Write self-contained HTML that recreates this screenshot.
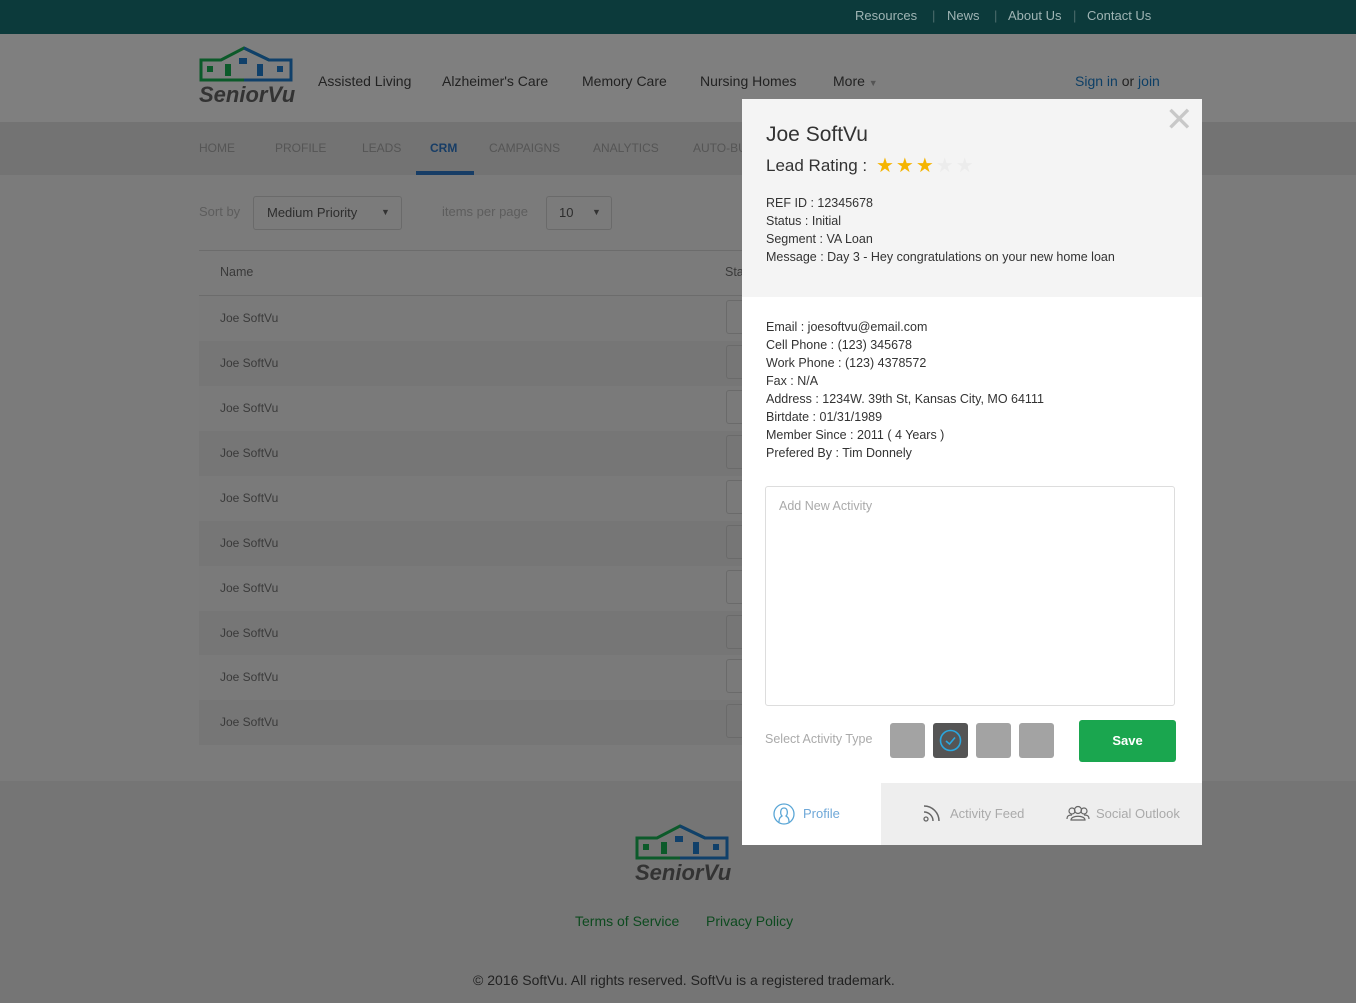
<!DOCTYPE html>
<html><head><meta charset="utf-8"><style>
*{margin:0;padding:0;box-sizing:border-box}
body{width:1356px;height:1003px;overflow:hidden;font-family:"Liberation Sans",sans-serif;background:#7b7b7b;position:relative;font-size:13px}
.a{position:absolute;white-space:nowrap}
.top{left:0;top:0;width:1356px;height:34px;background:#0c3a3b}
.top span{color:#9fb4b4;font-size:13px;top:8px}
.hdr{left:0;top:34px;width:1356px;height:88px;background:#7f7f7f}
.hdr .n{color:#222;font-size:14px;top:39px}
.nav{left:0;top:122px;width:1356px;height:53px;background:#737373}
.nav span{color:#5a5a5a;font-size:12px;top:20px}
.row{left:199px;width:545px;height:45px}
.row span{left:21px;top:15px;color:#3a3a3a;font-size:12px}
.box{left:726px;width:20px;height:34px;border:1px solid #6a6a6a;border-radius:3px}
.modal{left:742px;top:99px;width:460px;height:746px;background:#fff}
.m{color:#333;font-size:12.5px}
.sq{width:35px;height:35px;border-radius:3px;background:#a3a3a3;top:723px}
</style></head><body>
<div class="a top"></div>
<span class="a" style="left:855px;top:8px;color:#9fb4b4">Resources</span>
<span class="a" style="left:932px;top:8px;color:#4d6d6d">|</span>
<span class="a" style="left:947px;top:8px;color:#9fb4b4">News</span>
<span class="a" style="left:994px;top:8px;color:#4d6d6d">|</span>
<span class="a" style="left:1008px;top:8px;color:#9fb4b4">About Us</span>
<span class="a" style="left:1073px;top:8px;color:#4d6d6d">|</span>
<span class="a" style="left:1087px;top:8px;color:#9fb4b4">Contact Us</span>
<div class="a hdr"></div>
<svg class="a" style="left:199px;top:46px" width="94" height="36" viewBox="0 0 94 36"><path d="M2 14 H22 L45 2 L70 14 H92 V34 H2 Z" fill="none" stroke="#0c5a2a" stroke-width="3"/><path d="M45 2 L70 14 H92 V34 H45" fill="none" stroke="#10406a" stroke-width="3"/><rect x="8" y="20" width="6" height="6" fill="#0c5a2a"/><rect x="26" y="18" width="6" height="12" fill="#0c5a2a"/><rect x="40" y="12" width="8" height="6" fill="#10406a"/><rect x="58" y="18" width="6" height="12" fill="#10406a"/><rect x="78" y="20" width="6" height="6" fill="#10406a"/></svg>
<span class="a" style="left:199px;top:82px;font-size:22px;font-weight:bold;font-style:italic;color:#333">SeniorVu</span>
<span class="a" style="left:318px;top:73px;font-size:14px;color:#222">Assisted Living</span>
<span class="a" style="left:442px;top:73px;font-size:14px;color:#222">Alzheimer's Care</span>
<span class="a" style="left:582px;top:73px;font-size:14px;color:#222">Memory Care</span>
<span class="a" style="left:700px;top:73px;font-size:14px;color:#222">Nursing Homes</span>
<span class="a" style="left:833px;top:73px;font-size:14px;color:#222">More <span style="font-size:9px;color:#555">▼</span></span>
<span class="a" style="left:1075px;top:73px;font-size:14px;color:#0d3f66">Sign in <span style="color:#222">or</span> join</span>
<div class="a nav"></div>
<span class="a" style="left:199px;top:141px;font-size:12px;color:#555">HOME</span>
<span class="a" style="left:275px;top:141px;font-size:12px;color:#555">PROFILE</span>
<span class="a" style="left:362px;top:141px;font-size:12px;color:#555">LEADS</span>
<span class="a" style="left:430px;top:141px;font-size:12px;color:#173d66;font-weight:bold">CRM</span>
<div class="a" style="left:416px;top:171px;width:58px;height:4px;background:#173d66"></div>
<span class="a" style="left:489px;top:141px;font-size:12px;color:#555">CAMPAIGNS</span>
<span class="a" style="left:593px;top:141px;font-size:12px;color:#555">ANALYTICS</span>
<span class="a" style="left:693px;top:141px;font-size:12px;color:#555">AUTO-BU</span>
<span class="a" style="left:199px;top:204px;font-size:13px;color:#5d5d5d">Sort by</span>
<div class="a" style="left:253px;top:196px;width:149px;height:34px;border:1px solid #6a6a6a;border-radius:3px"></div>
<span class="a" style="left:267px;top:205px;font-size:13px;color:#2d2d2d">Medium Priority</span>
<span class="a" style="left:381px;top:207px;font-size:9px;color:#333">▼</span>
<span class="a" style="left:442px;top:204px;font-size:13px;color:#5d5d5d">items per page</span>
<div class="a" style="left:546px;top:196px;width:66px;height:34px;border:1px solid #6a6a6a;border-radius:3px"></div>
<span class="a" style="left:559px;top:205px;font-size:13px;color:#2d2d2d">10</span>
<span class="a" style="left:592px;top:207px;font-size:9px;color:#333">▼</span>
<div class="a" style="left:199px;top:250px;width:545px;height:1px;background:#6c6c6c"></div>
<span class="a" style="left:220px;top:265px;font-size:12.5px;color:#3a3a3a">Name</span>
<span class="a" style="left:725px;top:265px;font-size:12.5px;color:#3a3a3a">Sta</span>
<div class="a" style="left:199px;top:295px;width:545px;height:1px;background:#6c6c6c"></div>
<div class="a row" style="top:296px;background:#7a7a7a"><span class="a">Joe SoftVu</span></div>
<div class="a row" style="top:341px;background:#767676"><span class="a">Joe SoftVu</span></div>
<div class="a row" style="top:386px;background:#7a7a7a"><span class="a">Joe SoftVu</span></div>
<div class="a row" style="top:431px;background:#767676"><span class="a">Joe SoftVu</span></div>
<div class="a row" style="top:476px;background:#7a7a7a"><span class="a">Joe SoftVu</span></div>
<div class="a row" style="top:521px;background:#767676"><span class="a">Joe SoftVu</span></div>
<div class="a row" style="top:566px;background:#7a7a7a"><span class="a">Joe SoftVu</span></div>
<div class="a row" style="top:611px;background:#767676"><span class="a">Joe SoftVu</span></div>
<div class="a row" style="top:655px;background:#7a7a7a"><span class="a">Joe SoftVu</span></div>
<div class="a row" style="top:700px;background:#767676"><span class="a">Joe SoftVu</span></div>
<div class="a box" style="top:300px"></div><div class="a box" style="top:345px"></div><div class="a box" style="top:390px"></div><div class="a box" style="top:435px"></div><div class="a box" style="top:480px"></div><div class="a box" style="top:525px"></div><div class="a box" style="top:570px"></div><div class="a box" style="top:615px"></div><div class="a box" style="top:659px"></div><div class="a box" style="top:704px"></div>
<div class="a" style="left:0;top:781px;width:1356px;height:222px;background:#757575"></div>
<svg class="a" style="left:635px;top:824px" width="94" height="36" viewBox="0 0 94 36"><path d="M2 14 H22 L45 2 L70 14 H92 V34 H2 Z" fill="none" stroke="#0c5a2a" stroke-width="3"/><path d="M45 2 L70 14 H92 V34 H45" fill="none" stroke="#10406a" stroke-width="3"/><rect x="8" y="20" width="6" height="6" fill="#0c5a2a"/><rect x="26" y="18" width="6" height="12" fill="#0c5a2a"/><rect x="40" y="12" width="8" height="6" fill="#10406a"/><rect x="58" y="18" width="6" height="12" fill="#10406a"/><rect x="78" y="20" width="6" height="6" fill="#10406a"/></svg>
<span class="a" style="left:635px;top:860px;font-size:22px;font-weight:bold;font-style:italic;color:#333">SeniorVu</span>
<span class="a" style="left:575px;top:913px;font-size:14px;color:#0d4a1f">Terms of Service</span>
<span class="a" style="left:706px;top:913px;font-size:14px;color:#0d4a1f">Privacy Policy</span>
<span class="a" style="left:473px;top:972px;font-size:14px;color:#222">© 2016 SoftVu. All rights reserved. SoftVu is a registered trademark.</span>

<div class="a modal"></div>
<div class="a" style="left:742px;top:99px;width:460px;height:198px;background:#f4f4f4"></div>
<span class="a" style="left:1165px;top:100px;font-size:34px;color:#c8c8c8">✕</span>
<span class="a" style="left:766px;top:123px;font-size:21px;color:#333">Joe SoftVu</span>
<span class="a" style="left:766px;top:156px;font-size:17px;color:#333">Lead Rating :</span>
<span class="a" style="left:876px;top:153px;font-size:20px;color:#f5b400;letter-spacing:2px">★★★<span style="color:#ececec">★★</span></span>
<div class="a m" style="left:766px;top:194px;line-height:18px">REF ID : 12345678<br>Status : Initial<br>Segment : VA Loan<br>Message : Day 3 - Hey congratulations on your new home loan</div>
<div class="a m" style="left:766px;top:318px;line-height:18px">Email : joesoftvu@email.com<br>Cell Phone : (123) 345678<br>Work Phone : (123) 4378572<br>Fax : N/A<br>Address : 1234W. 39th St, Kansas City, MO 64111<br>Birtdate : 01/31/1989<br>Member Since : 2011 ( 4 Years )<br>Prefered By : Tim Donnely</div>
<div class="a" style="left:765px;top:486px;width:410px;height:220px;border:1px solid #ddd;border-radius:3px"></div>
<span class="a" style="left:779px;top:499px;font-size:12.5px;color:#aaa">Add New Activity</span>
<span class="a" style="left:765px;top:732px;font-size:12.5px;color:#aaa">Select Activity Type</span>
<div class="a sq" style="left:890px"></div>
<div class="a sq" style="left:933px;background:#555"></div>
<svg class="a" style="left:939px;top:729px" width="23" height="23"><circle cx="11.5" cy="11.5" r="10" fill="none" stroke="#2aa8e0" stroke-width="1.6"/><path d="M7 12 L10.5 15 L16 8.5" fill="none" stroke="#2aa8e0" stroke-width="1.6"/></svg>
<div class="a sq" style="left:976px"></div>
<div class="a sq" style="left:1019px"></div>
<div class="a" style="left:1079px;top:720px;width:97px;height:42px;background:#1aa64f;border-radius:3px;color:#fff;font-size:13px;font-weight:bold;text-align:center;line-height:42px">Save</div>
<div class="a" style="left:881px;top:783px;width:321px;height:62px;background:#eeeeee"></div>
<svg class="a" style="left:773px;top:803px" width="22" height="22"><circle cx="11" cy="11" r="10" fill="none" stroke="#5aa6d6" stroke-width="1.3"/><path d="M6 19 C6 14 8 14 9 13 C7 11 7 5 11 5 C15 5 15 11 13 13 C14 14 16 14 16 19" fill="none" stroke="#5aa6d6" stroke-width="1.3"/></svg>
<span class="a" style="left:803px;top:806px;font-size:13px;color:#6fa8d8">Profile</span>
<svg class="a" style="left:923px;top:804px" width="18" height="18"><circle cx="3" cy="15" r="2" fill="none" stroke="#666" stroke-width="1.3"/><path d="M1 8 A9 9 0 0 1 10 17 M1 2 A15 15 0 0 1 16 17" fill="none" stroke="#666" stroke-width="1.5"/></svg>
<span class="a" style="left:950px;top:806px;font-size:13px;color:#aaa">Activity Feed</span>
<svg class="a" style="left:1066px;top:805px" width="24" height="16"><circle cx="12" cy="5" r="3.5" fill="none" stroke="#666" stroke-width="1.2"/><path d="M5 15 C5 10 19 10 19 15 Z" fill="none" stroke="#666" stroke-width="1.2"/><circle cx="6" cy="6" r="3" fill="none" stroke="#666" stroke-width="1.2"/><circle cx="18" cy="6" r="3" fill="none" stroke="#666" stroke-width="1.2"/><path d="M1 14 C1 10 4 10 6 10 M23 14 C23 10 20 10 18 10" fill="none" stroke="#666" stroke-width="1.2"/></svg>
<span class="a" style="left:1096px;top:806px;font-size:13px;color:#aaa">Social Outlook</span>
</body></html>
